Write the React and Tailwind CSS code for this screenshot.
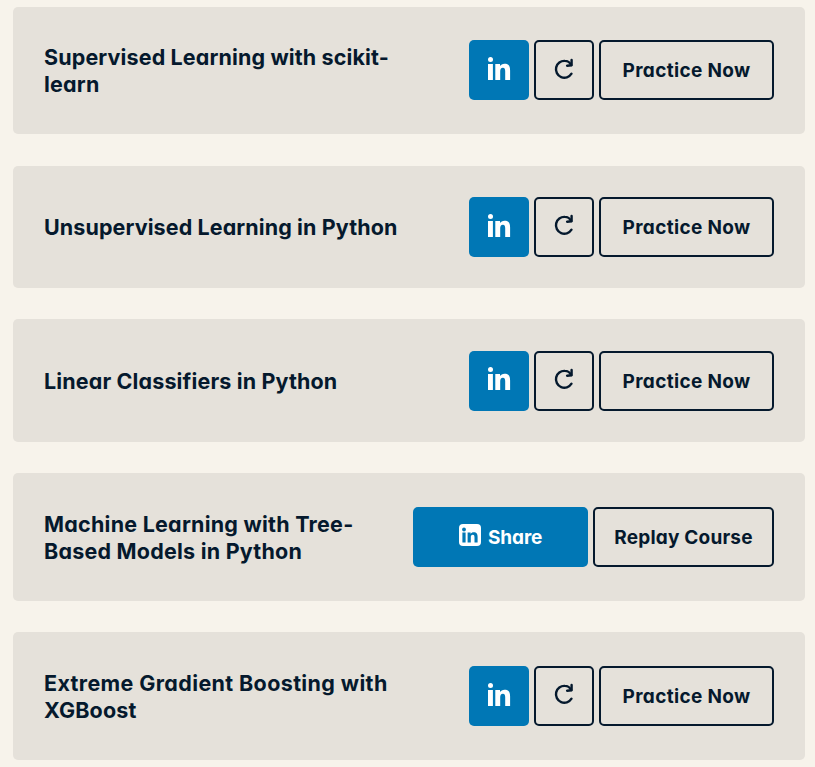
const FONT = "font-['Inter','Open_Sans',sans-serif] [font-feature-settings:'cv11','ss03']";

const courses = [
  {
    card: 'h-[127px] mb-8 pb-px',
    title: 'pt-px',
    mark: 'pb-0.5',
    replay: '',
    lines: [
      { text: 'Supervised Learning with scikit-', style: 'tracking-[0.13px]' },
      { text: 'learn', style: 'tracking-[0.2px]' },
    ],
  },
  {
    card: 'h-[122px] mb-[31px]',
    title: '',
    mark: 'pb-[3px]',
    replay: 'pb-0.5',
    lines: [{ text: 'Unsupervised Learning in Python', style: 'tracking-[0.1px]' }],
  },
  {
    card: 'h-[123px] mb-[31px]',
    title: 'pt-0.5',
    mark: 'pb-1',
    replay: 'pb-0.5',
    lines: [{ text: 'Linear Classifiers in Python', style: 'tracking-[0.14px]' }],
  },
  {
    card: 'h-32 mb-[31px]',
    title: 'pt-0.5',
    share: true,
    lines: [
      { text: 'Machine Learning with Tree-', style: 'tracking-[0.24px]' },
      { text: 'Based Models in Python', style: 'tracking-[0.22px]' },
    ],
  },
  {
    card: 'h-32',
    title: 'pt-0.5',
    mark: 'pb-[3px]',
    replay: 'pb-0.5',
    lines: [
      { text: 'Extreme Gradient Boosting with', style: 'tracking-[0.37px]' },
      { text: 'XGBoost', style: 'tracking-[0.15px]' },
    ],
  },
];

function LinkedInMark() {
  return (
    <svg className="h-6 w-6" viewBox="0 0 24 24" fill="currentColor" aria-hidden="true">
      <circle cx="3.500" cy="2.600" r="2.500" />
      <path d="M1 7h4.900v16H1zM8.300 7h4.700v2.100c.8-1.400 2.400-2.400 4.500-2.400 4.500 0 5.600 2.800 5.600 6.800V23h-4.900v-8.400c0-2.100-.3-3.900-2.300-3.900s-2.700 1.700-2.700 3.800V23H8.300z" />
    </svg>
  );
}

function LinkedInBadge() {
  return (
    <svg className="h-[22px] w-[22px]" viewBox="0 0 22 22" aria-hidden="true">
      <rect width="22" height="22" rx="4" fill="white" />
      <g fill="#0077b5">
        <circle cx="5" cy="5.5" r="1.9" />
        <path d="M3.4 8.5h3.2v10H3.4zM8.6 8.5h3v1.4c.6-1 1.700-1.650 3.100-1.650 3 0 3.900 1.900 3.900 4.700v5.550h-3.100v-5c0-1.500-.2-2.700-1.700-2.700s-2 1.200-2 2.600v5.100H8.6z" />
      </g>
    </svg>
  );
}

function ReplayIcon() {
  return (
    <svg className="h-6 w-6" viewBox="0 0 24 24" fill="none" stroke="currentColor" strokeWidth="2.4" strokeLinecap="round" strokeLinejoin="round" aria-hidden="true">
      <path d="M19.500 15.700A8.400 8.400 0 1 1 12.900 2.900C15.700 2.900 17.700 4.200 19.200 7" />
      <path d="M19.600 1.900V7.200l-4.500.5" />
    </svg>
  );
}

const outline = 'flex h-[60px] items-center justify-center rounded-[5px] border-2 border-[#05192d]';
const label = 'whitespace-nowrap pt-0.5 text-[19px] leading-6 font-bold';

function Actions({ share, mark, replay }) {
  if (share) {
    return (
      <div className="flex gap-[5px]">
        <button className="flex h-[60px] w-[175px] items-center justify-center gap-[7px] rounded-[5px] bg-[#0077b5] text-white">
          <span className="pb-1"><LinkedInBadge /></span>
          <span className={`${label} w-[54px] tracking-[-0.1px]`}>Share</span>
        </button>
        <button className={`${outline} w-[181px]`}>
          <span className={`${label} tracking-[0.2px]`}>Replay Course</span>
        </button>
      </div>
    );
  }
  return (
    <div className="flex gap-[5px]">
      <button aria-label="Share on LinkedIn" className={`flex h-[60px] w-[60px] items-center justify-center rounded-[5px] bg-[#0077b5] text-white ${mark}`}>
        <LinkedInMark />
      </button>
      <button aria-label="Replay" className={`${outline} w-[60px] ${replay}`}>
        <ReplayIcon />
      </button>
      <button className={`${outline} w-[175px]`}>
        <span className={`${label} tracking-[0.33px]`}>Practice Now</span>
      </button>
    </div>
  );
}

export default function App() {
  return (
    <main className={`h-[767px] w-[815px] overflow-hidden bg-[#f7f3eb] pt-[7px] pl-[13px] text-[#05192d] ${FONT}`}>
      {courses.map((course) => (
        <section key={course.lines[0].text} className={`flex w-[792px] items-center justify-between rounded-[5px] bg-[#e5e1da] px-[31px] ${course.card}`}>
          <h2 className={`text-[21.5px] leading-[27px] font-bold whitespace-nowrap ${course.title}`}>
            {course.lines.map((line) => (
              <span key={line.text} className={`block ${line.style}`}>{line.text}</span>
            ))}
          </h2>
          <Actions share={course.share} mark={course.mark} replay={course.replay} />
        </section>
      ))}
    </main>
  );
}
